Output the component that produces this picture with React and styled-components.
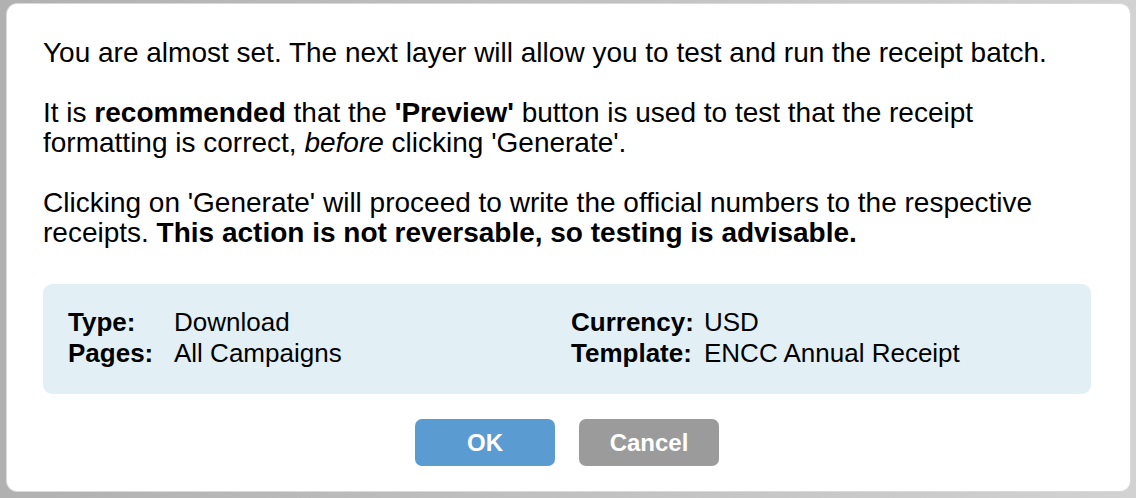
import React from 'react'
import styled, { createGlobalStyle } from 'styled-components'

const GlobalStyle = createGlobalStyle`
  html, body {
    margin: 0;
    padding: 0;
    background: #b3b3b3;
  }
  body {
    font-family: "Liberation Sans", Arial, Helvetica, sans-serif;
  }
`;

const Backdrop = styled.div`
  width: 1136px;
  height: 498px;
  box-sizing: border-box;
  padding: 3px 5px 6px 6px;
  background: linear-gradient(90deg, #b1b1b1 0%, #c4c4c4 60%, #d2d2d2 100%);
`;

const Dialog = styled.div`
  box-sizing: border-box;
  height: 100%;
  background: #ffffff;
  border: 1px solid #d9d9d9;
  border-radius: 11px;
  padding: 34px 39px 0 36px;
  display: flex;
  flex-direction: column;
  color: #000;
`;

const Paragraph = styled.p`
  margin: 0 0 ${p => p.last ? 0 : 30}px 0;
  font-size: 28px;
  line-height: 30px;
`;

const InfoBox = styled.div`
  margin-top: 36px;
  background: #e2f0f6;
  border-radius: 9px;
  padding: 23px 25px 25px 25px;
  display: grid;
  grid-template-columns: 503px 1fr;
`;

const InfoColumn = styled.div`
  display: grid;
  grid-template-columns: ${p => p.labelWidth}px 1fr;
  font-size: 26px;
  line-height: 31px;
`;

const Label = styled.span`
  font-weight: 700;
`;

const Value = styled.span``;

const Buttons = styled.div`
  display: flex;
  justify-content: center;
  gap: 24px;
  margin-top: 25px;
`;

const Button = styled.button`
  width: 140px;
  height: 47px;
  border: none;
  border-radius: 7px;
  background: ${p => p.primary ? '#5a9bd1' : '#9b9b9b'};
  color: #fff;
  font-family: "Liberation Sans", Arial, sans-serif;
  font-weight: 700;
  font-size: 24px;
  cursor: pointer;
`;

export default function App() {
  return (
    <>
      <GlobalStyle />
      <Backdrop>
        <Dialog>
          <Paragraph>
            You are almost set. The next layer will allow you to test and run the receipt batch.
          </Paragraph>
          <Paragraph>
            It is <b>recommended</b> that the <b>'Preview'</b> button is used to test that the receipt formatting is correct, <i>before</i> clicking 'Generate'.
          </Paragraph>
          <Paragraph last>
            Clicking on 'Generate' will proceed to write the official numbers to the respective receipts. <b>This action is not reversable, so testing is advisable.</b>
          </Paragraph>
          <InfoBox>
            <InfoColumn labelWidth={106}>
              <Label>Type:</Label>
              <Value>Download</Value>
              <Label>Pages:</Label>
              <Value>All Campaigns</Value>
            </InfoColumn>
            <InfoColumn labelWidth={133}>
              <Label>Currency:</Label>
              <Value>USD</Value>
              <Label>Template:</Label>
              <Value>ENCC Annual Receipt</Value>
            </InfoColumn>
          </InfoBox>
          <Buttons>
            <Button primary>OK</Button>
            <Button>Cancel</Button>
          </Buttons>
        </Dialog>
      </Backdrop>
    </>
  )
}
